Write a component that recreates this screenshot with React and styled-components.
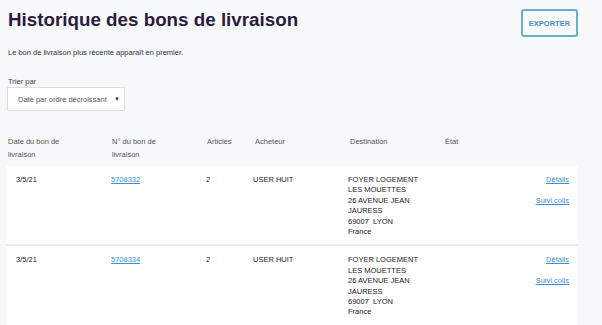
import React from 'react';
import styled, { createGlobalStyle } from 'styled-components';

const GlobalStyle = createGlobalStyle`
  html, body {
    margin: 0;
    background: #f7f8fa;
  }
  body {
    font-family: "Liberation Sans", Arial, sans-serif;
    color: #333;
  }
`;

const Page = styled.div`
  padding: 8px 24px 0 6px;
`;

const Header = styled.div`
  display: flex;
  justify-content: space-between;
  align-items: flex-start;
`;

const Title = styled.h1`
  margin: 0 0 0 2px;
  font-size: 18.8px;
  line-height: 24px;
  font-weight: 700;
  color: #2b1b3d;
`;

const ExportButton = styled.button`
  margin-top: 1px;
  width: 57px;
  height: 28px;
  border: 2px solid #6aaed6;
  border-radius: 3px;
  background: transparent;
  color: #4a8fc7;
  font-family: inherit;
  font-size: 7.5px;
  font-weight: 700;
  padding: 0;
`;

const Intro = styled.p`
  margin: 11px 0 0 2px;
  font-size: 7.5px;
  color: #333;
`;

const SortBlock = styled.div`
  margin: 20px 0 0 1px;
  display: flex;
  flex-direction: column;
  gap: 1px;
`;

const SortLabel = styled.label`
  margin-left: 1px;
  font-size: 7.5px;
  color: #444;
`;

const Select = styled.div`
  width: 118px;
  height: 24px;
  box-sizing: border-box;
  border: 1px solid #dcdde0;
  background: #fff;
  display: flex;
  align-items: center;
  justify-content: space-between;
  padding: 0 4px 0 10px;
  font-size: 7.5px;
  color: #555;
`;

const Arrow = styled.span`
  font-size: 6px;
  color: #333;
`;

const Table = styled.div`
  margin-top: 24px;
`;

const grid = `
  display: grid;
  grid-template-columns: 104px 95px 48px 95px 95px 1fr;
`;

const HeadRow = styled.div`
  ${grid}
  padding-left: 2px;
  font-size: 7.5px;
  line-height: 13px;
  color: #555;
  height: 31px;
`;

const HeadCell = styled.div`
  max-width: 66px;
`;

const Row = styled.div`
  ${grid}
  background: #fff;
  padding: 9px 0 7px;
  font-size: 7.5px;
  line-height: 10.4px;
  color: #222;
  & + & {
    border-top: 2px solid #ebecef;
  }
`;

const Cell = styled.div`
  padding-left: ${(p) => p.$indent || 0}px;
`;

const Link = styled.a`
  color: #3d8fd1;
  text-decoration: underline;
`;

const Actions = styled.div`
  display: flex;
  flex-direction: column;
  align-items: flex-end;
  gap: 10.4px;
  padding-right: 9px;
`;

const rows = [
  { date: '3/5/21', num: '5708332', qty: 2, buyer: 'USER HUIT' },
  { date: '3/5/21', num: '5708334', qty: 2, buyer: 'USER HUIT' },
];

const address = ['FOYER LOGEMENT', 'LES MOUETTES', '26 AVENUE JEAN', 'JAURESS', '69007\u00a0 LYON', 'France'];

export default function App() {
  return (
    <>
      <GlobalStyle />
      <Page>
        <Header>
          <Title>Historique des bons de livraison</Title>
          <ExportButton type="button">EXPORTER</ExportButton>
        </Header>
        <Intro>Le bon de livraison plus récente apparaît en premier.</Intro>
        <SortBlock>
          <SortLabel>Trier par</SortLabel>
          <Select>
            <span>Date par ordre décroissant</span>
            <Arrow>▼</Arrow>
          </Select>
        </SortBlock>
        <Table>
          <HeadRow>
            <HeadCell>Date du bon de livraison</HeadCell>
            <HeadCell>N° du bon de livraison</HeadCell>
            <HeadCell>Articles</HeadCell>
            <HeadCell>Acheteur</HeadCell>
            <HeadCell>Destination</HeadCell>
            <HeadCell>État</HeadCell>
          </HeadRow>
          {rows.map((r) => (
            <Row key={r.num}>
              <Cell $indent={10}>{r.date}</Cell>
              <Cell $indent={1}><Link href="#">{r.num}</Link></Cell>
              <Cell $indent={1}>{r.qty}</Cell>
              <Cell>{r.buyer}</Cell>
              <Cell>
                {address.map((l) => (
                  <div key={l}>{l}</div>
                ))}
              </Cell>
              <Actions>
                <Link href="#">Détails</Link>
                <Link href="#">Suivi colis</Link>
              </Actions>
            </Row>
          ))}
        </Table>
      </Page>
    </>
  );
}
